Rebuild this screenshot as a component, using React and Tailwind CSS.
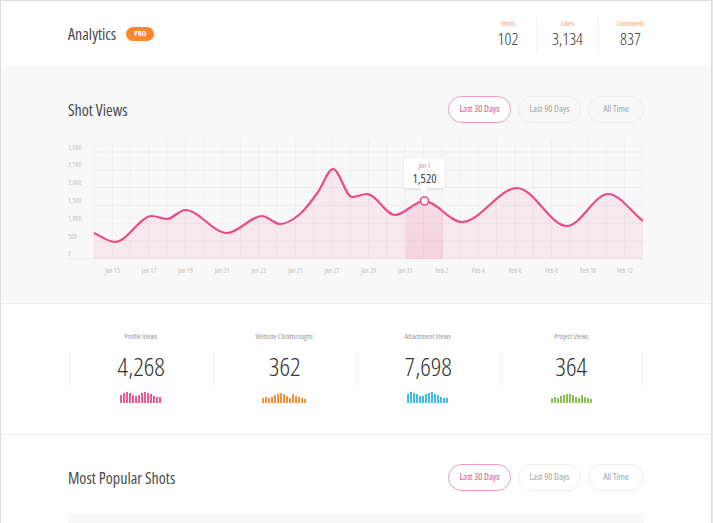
import React from 'react'

const POINTS = [
  [94, 233], [115, 242], [152, 216], [167, 219], [185, 210], [227, 233], [262, 216],
  [280, 224], [300, 214], [318, 192], [333, 169], [352, 197], [367, 194], [395, 215],
  [424, 201], [462, 222], [517, 188], [567, 226], [608, 194], [643, 221],
]

function smoothPath(pts) {
  const m = pts.map((p, i) => {
    if (i === 0) return (pts[1][1] - p[1]) / (pts[1][0] - p[0])
    if (i === pts.length - 1) return (p[1] - pts[i - 1][1]) / (p[0] - pts[i - 1][0])
    const d0 = (p[1] - pts[i - 1][1]) / (p[0] - pts[i - 1][0])
    const d1 = (pts[i + 1][1] - p[1]) / (pts[i + 1][0] - p[0])
    return d0 * d1 <= 0 ? 0 : (d0 + d1) / 2
  })
  let d = `M${pts[0][0]} ${pts[0][1]}`
  for (let i = 0; i < pts.length - 1; i++) {
    const [x0, y0] = pts[i]
    const [x1, y1] = pts[i + 1]
    const dx = x1 - x0
    d += ` C${x0 + dx / 3} ${y0 + (m[i] * dx) / 3} ${x1 - dx / 3} ${y1 - (m[i + 1] * dx) / 3} ${x1} ${y1}`
  }
  return d
}

const LINE = smoothPath(POINTS)
const AREA = `${LINE} L643 259 L94 259 Z`

const Y_LABELS = ['3,000', '2,500', '2,000', '1,500', '1,000', '500', '0']
const X_LABELS = ['Jan 15', 'Jan 17', 'Jan 19', 'Jan 21', 'Jan 23', 'Jan 25', 'Jan 27', 'Jan 29', 'Jan 31', 'Feb 2', 'Feb 4', 'Feb 6', 'Feb 8', 'Feb 10', 'Feb 12']
const DAY = 549 / 30

function Chart() {
  return (
    <div className="relative mt-[17px] h-[138px]">
      <svg width="575" height="138" viewBox="68 140 575 138" className="block">
        <defs>
          <clipPath id="area-clip">
            <path d={AREA} />
          </clipPath>
          <linearGradient id="band" x1="0" y1="0" x2="0" y2="1">
            <stop offset="0" stopColor="#ea4c89" stopOpacity="0.02" />
            <stop offset="1" stopColor="#ea4c89" stopOpacity="0.14" />
          </linearGradient>
        </defs>
        <path d={AREA} fill="#ea4c89" fillOpacity="0.09" />
        <rect x="406" y="150" width="37" height="110" fill="url(#band)" clipPath="url(#area-clip)" />
        {Array.from({ length: 31 }).map((_, i) => (
          <line key={i} x1={94 + i * DAY} x2={94 + i * DAY} y1="140" y2="259" stroke="#000" strokeOpacity="0.03" />
        ))}
        {Y_LABELS.map((l, i) => (
          <g key={l}>
            <line x1={i === 6 ? 68 : 94} x2="643" y1={152 + i * 17.8} y2={152 + i * 17.8} stroke="#000" strokeOpacity="0.04" />
            <text x="68" y={149.5 + i * 17.8} fontSize="7" fill="#c6c6c6">{l}</text>
          </g>
        ))}
        {X_LABELS.map((l, i) => (
          <text key={l} x={112.3 + i * 2 * DAY} y="273" fontSize="7" fill="#c2c2c2" textAnchor="middle">{l}</text>
        ))}
        <path d={LINE} fill="none" stroke="#ea4c89" strokeWidth="2.2" />
        <circle cx="424.5" cy="201" r="4" fill="#fff" stroke="#ea4c89" strokeWidth="1.6" />
      </svg>
      {/* tooltip */}
      <div className="absolute left-[336px] top-[18px] w-[41px] h-[30px] bg-white rounded-[2px] shadow-[0_1px_3px_rgba(0,0,0,0.12)] flex flex-col items-center justify-center">
        <span className="text-[7px] leading-[10px] text-[#f07aa8]">Jan 1</span>
        <span className="text-[12.5px] leading-[15px] text-[#444]">1,520</span>
        <span className="absolute -bottom-[3px] left-[17px] w-[6px] h-[6px] bg-white rotate-45" />
      </div>
    </div>
  )
}

function RangeButtons() {
  return (
    <div className="flex gap-[7px] text-[9.5px]">
      <button className="w-[63px] h-[27px] rounded-full border border-[#f49ab9] bg-white text-[#ea4c89]">Last 30 Days</button>
      <button className="w-[63px] h-[27px] rounded-full border border-[#ececec] text-[#a5a5a5]">Last 90 Days</button>
      <button className="w-[56px] h-[27px] rounded-full border border-[#ececec] text-[#a5a5a5]">All Time</button>
    </div>
  )
}

function Spark({ bars, color }) {
  return (
    <div className="flex items-end justify-center gap-px h-[11px]">
      {bars.map((h, i) => (
        <div key={i} className={`w-[2px] ${color}`} style={{ height: h }} />
      ))}
    </div>
  )
}

const STATS = [
  { label: 'Profile Views', value: '4,268', color: 'bg-[#ee5b93]', bars: [8, 10, 11, 10, 8, 7, 8, 10, 11, 10, 9, 7, 6, 6] },
  { label: 'Website Clickthroughs', value: '362', color: 'bg-[#f8933d]', bars: [5, 6, 5, 6, 8, 9, 10, 9, 7, 5, 9, 7, 6, 5, 4] },
  { label: 'Attachment Views', value: '7,698', color: 'bg-[#3fbde8]', bars: [9, 11, 10, 9, 7, 7, 9, 10, 11, 9, 8, 6, 5, 5] },
  { label: 'Project Views', value: '364', color: 'bg-[#8dc153]', bars: [5, 6, 5, 7, 8, 9, 9, 8, 6, 5, 8, 6, 5, 4] },
]

export default function App() {
  return (
    <div className="min-h-screen bg-[#e6e9e9] font-['Open_Sans',sans-serif] font-stretch-condensed">
      <div className="w-[712px] bg-white border-l border-t border-r border-[#dedede]">
        {/* Header */}
        <header className="h-[65px] flex items-center pl-[67px] pr-[49px]">
          <h1 className="text-[16px] text-[#4a4a4a]">Analytics</h1>
          <span className="ml-[10px] h-[14px] px-[8px] rounded-full bg-[#f7882f] text-white text-[7.5px] font-bold flex items-center">PRO</span>
          <div className="ml-auto flex">
            {[['Shots', '102', 'w-[56px]'], ['Likes', '3,134', 'w-[62px] border-l'], ['Comments', '837', 'w-[64px] border-l']].map(([l, v, c]) => (
              <div key={l} className={`${c} border-[#f0f0f0] h-[34px] flex flex-col items-center justify-center`}>
                <span className="text-[7.5px] leading-[9px] text-[#f9a46e]">{l}</span>
                <span className="mt-[2px] text-[17px] leading-[18px] font-light text-[#333]">{v}</span>
              </div>
            ))}
          </div>
        </header>

        {/* Shot Views */}
        <section className="bg-[#f8f8f8] px-[67px] pt-[30px] pb-[25px]">
          <div className="flex items-center justify-between">
            <h2 className="text-[16px] text-[#4a4a4a]">Shot Views</h2>
            <RangeButtons />
          </div>
          <Chart />
        </section>

        {/* Stats */}
        <section className="border-t border-[#ededed] h-[131px] pl-[68px] pr-[68px] pt-[27px] grid grid-cols-4">
          {STATS.map((s, i) => (
            <div key={s.label} className="flex flex-col items-center">
              <span className="text-[7.5px] leading-[10px] text-[#999]">{s.label}</span>
              <div className={`mt-[11px] w-full h-[33px] pb-[5px] border-l ${i === 3 ? 'border-r' : ''} border-[#f0f0f0] flex items-center justify-center`}>
                <span className="text-[26px] leading-[30px] font-light text-[#333]">{s.value}</span>
              </div>
              <div className="mt-[7px]">
                <Spark bars={s.bars} color={s.color} />
              </div>
            </div>
          ))}
        </section>

        {/* Most Popular Shots */}
        <section className="border-t border-[#ededed] px-[67px] pt-[29px]">
          <div className="flex items-center justify-between">
            <h2 className="text-[16px] text-[#4a4a4a]">Most Popular Shots</h2>
            <RangeButtons />
          </div>
          <div className="mt-[23px] h-[40px] bg-[#f7f7f7]" />
        </section>
      </div>
    </div>
  )
}
